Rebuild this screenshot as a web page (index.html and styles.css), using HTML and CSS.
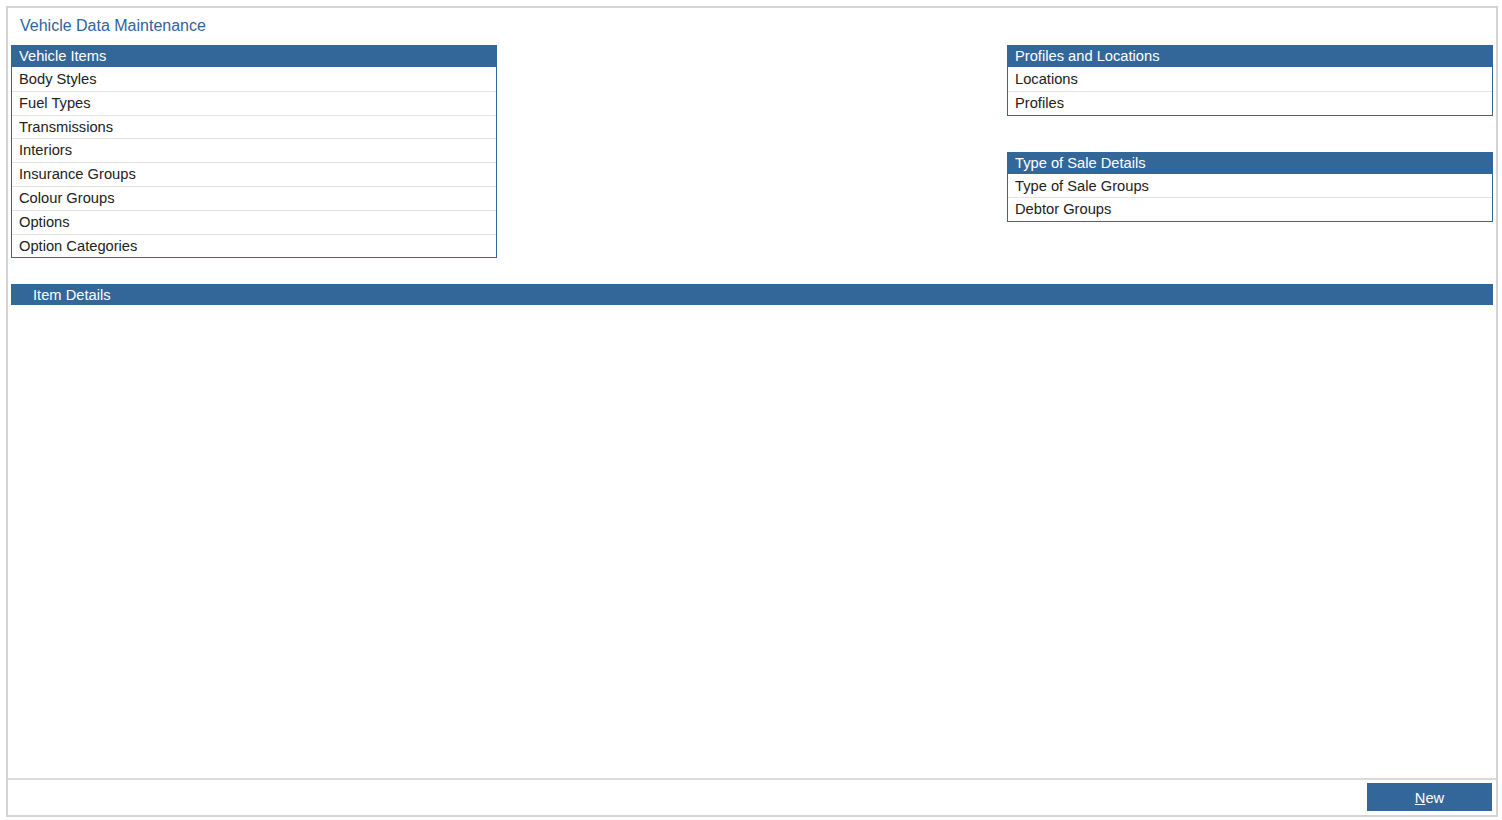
FILE: index.html
```html
<!DOCTYPE html>
<html lang="en">
<head>
  <meta charset="UTF-8" />
  <meta name="viewport" content="width=device-width, initial-scale=1.0" />
  <title>Vehicle Data Maintenance</title>
  <link rel="stylesheet" href="styles.css">
</head>
<body>
  <div class="frame">
    <div class="content">
      <h1 class="page-title">Vehicle Data Maintenance</h1>

      <div class="top-row">
        <!-- Coluna esquerda -->
        <div class="column">
          <div class="panel">
            <div class="panel-head">Vehicle Items</div>
            <div class="row">Body Styles</div>
            <div class="row">Fuel Types</div>
            <div class="row">Transmissions</div>
            <div class="row">Interiors</div>
            <div class="row">Insurance Groups</div>
            <div class="row">Colour Groups</div>
            <div class="row">Options</div>
            <div class="row">Option Categories</div>
          </div>
        </div>

        <!-- Coluna direita -->
        <div class="column">
          <div class="panel">
            <div class="panel-head">Profiles and Locations</div>
            <div class="row">Locations</div>
            <div class="row">Profiles</div>
          </div>
          <div class="panel">
            <div class="panel-head">Type of Sale Details</div>
            <div class="row">Type of Sale Groups</div>
            <div class="row">Debtor Groups</div>
          </div>
        </div>
      </div>

      <div class="details-bar">Item Details</div>
    </div>

    <div class="footer">
      <button class="btn-new"><u>N</u>ew</button>
    </div>
  </div>
</body>
</html>
```

FILE: styles.css
```css
/* Reset básico */
* {
  box-sizing: border-box;
  margin: 0;
  padding: 0;
  font-family: 'Liberation Sans', Arial, sans-serif;
}

body {
  background: #fff;
  color: #222;
}

.frame {
  margin: 6px 0 0 6px;
  width: 1492px;
  height: 811px;
  border: 2px solid #d4d4d4;
  display: flex;
  flex-direction: column;
}

.content {
  flex: 1;
  padding: 0 3px;
}

.page-title {
  font-size: 16px;
  font-weight: normal;
  color: #2e64a0;
  height: 37px;
  padding: 8px 0 0 9px;
  line-height: 20px;
}

.top-row {
  display: flex;
  justify-content: space-between;
  align-items: flex-start;
}

.column {
  display: flex;
  flex-direction: column;
  gap: 36px;
}

.panel {
  width: 486px;
  border: 1px solid #336699;
  border-top: none;
}

.panel-head {
  background: #336699;
  color: #fff;
  height: 22px;
  line-height: 22px;
  padding-left: 7px;
  font-size: 14.7px;
}

.row {
  height: 23.8px;
  line-height: 22px;
  padding-left: 7px;
  font-size: 14.7px;
  border-top: 1px solid #e2e2e2;
}

.panel-head + .row {
  border-top-color: #fff;
}

.details-bar {
  margin-top: 26px;
  background: #336699;
  color: #fff;
  height: 21px;
  line-height: 22px;
  padding-left: 22px;
  font-size: 14.7px;
}

.footer {
  height: 37px;
  border-top: 2px solid #dadada;
  display: flex;
  justify-content: flex-end;
  align-items: flex-start;
  padding: 3px 4px 0 0;
}

.btn-new {
  width: 125px;
  height: 28px;
  padding-top: 2px;
  background: #336699;
  color: #fff;
  border: none;
  font-size: 14.7px;
  cursor: pointer;
}
```
